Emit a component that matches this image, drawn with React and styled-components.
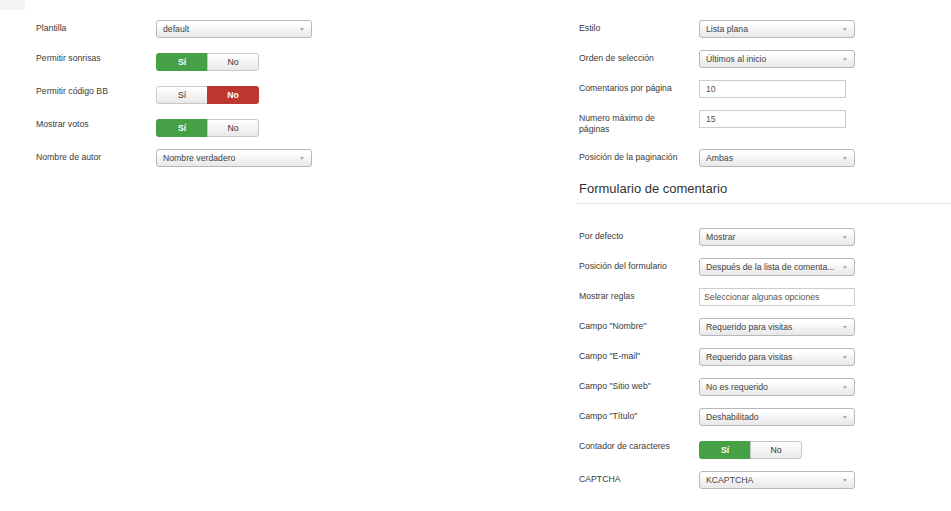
import React from "react";
import styled, { createGlobalStyle } from "styled-components";

const Global = createGlobalStyle`
  html, body { margin: 0; padding: 0; background: #fff; }
  body { font-family: "Liberation Sans", Arial, sans-serif; color: #333; }
`;

const Tab = styled.div`
  width: 25px;
  height: 10px;
  background: #f3f3f3;
  border-bottom-right-radius: 2px;
`;

const Page = styled.div`
  display: grid;
  grid-template-columns: 577px 1fr;
  margin-top: 10px;
`;

const Column = styled.div`
  padding-left: ${(p) => p.$pad}px;
  display: flex;
  flex-direction: column;
`;

const Row = styled.div`
  display: flex;
  align-items: flex-start;
  margin-bottom: 12px;
  padding-left: ${(p) => p.$indent || 0}px;
`;

const Label = styled.div`
  width: 120px;
  flex: none;
  font-size: 8.7px;
  line-height: 11px;
  padding: 3px 12px 2px 0;
  color: #3a3a3a;
  box-sizing: border-box;
`;

const Select = styled.div`
  position: relative;
  width: 156px;
  height: 18px;
  box-sizing: border-box;
  border: 1px solid #b8b8b8;
  border-radius: 3px;
  background: linear-gradient(#ffffff 20%, #f2f2f2 60%, #e8e8e8);
  font-size: 8.7px;
  line-height: 16px;
  padding-left: 6px;
  color: #444;
  white-space: nowrap;
  overflow: hidden;
  &::after {
    content: "";
    position: absolute;
    right: 7px;
    top: 7px;
    border-left: 2.5px solid transparent;
    border-right: 2.5px solid transparent;
    border-top: 3px solid #aaa;
  }
`;

const TextInput = styled.div`
  width: ${(p) => p.$w || 147}px;
  height: 18px;
  box-sizing: border-box;
  border: 1px solid #ccc;
  background: #fff;
  font-size: 8.7px;
  line-height: 16px;
  padding-left: ${(p) => p.$pl || 6}px;
  color: #555;
`;

const Toggle = styled.div`
  display: flex;
  width: 103px;
  height: 18px;
  margin-top: 3px;
`;

const ToggleBtn = styled.div`
  flex: 1;
  box-sizing: border-box;
  font-size: 8.7px;
  line-height: 16px;
  text-align: center;
  border: 1px solid ${(p) => (p.$active ? "transparent" : "#c8c8c8")};
  ${(p) => (p.$first ? "border-radius: 3px 0 0 3px;" : "border-radius: 0 3px 3px 0;")}
  ${(p) => (p.$first ? "" : "margin-left: -1px;")}
  background: ${(p) =>
    p.$active === "yes"
      ? "#46a046"
      : p.$active === "no"
      ? "#bd362f"
      : "linear-gradient(#ffffff, #e9e9e9)"};
  color: ${(p) => (p.$active ? "#fff" : "#333")};
  font-weight: ${(p) => (p.$active ? "bold" : "normal")};
`;

const Heading = styled.div`
  font-size: 13px;
  line-height: 20px;
  color: #333;
  padding: 0 0 4px 2px;
  border-bottom: 1px solid #e5e5e5;
  margin-bottom: 24px;
`;

const Switch = ({ value }) => (
  <Toggle>
    <ToggleBtn $first $active={value === "yes" ? "yes" : undefined}>Sí</ToggleBtn>
    <ToggleBtn $active={value === "no" ? "no" : undefined}>No</ToggleBtn>
  </Toggle>
);

export default function App() {
  return (
    <>
      <Global />
      <Tab />
      <Page>
        <Column $pad={36}>
          <Row>
            <Label>Plantilla</Label>
            <Select>default</Select>
          </Row>
          <Row>
            <Label>Permitir sonrisas</Label>
            <Switch value="yes" />
          </Row>
          <Row>
            <Label>Permitir código BB</Label>
            <Switch value="no" />
          </Row>
          <Row>
            <Label>Mostrar votos</Label>
            <Switch value="yes" />
          </Row>
          <Row>
            <Label>Nombre de autor</Label>
            <Select>Nombre verdadero</Select>
          </Row>
        </Column>
        <Column $pad={0}>
          <Row $indent={2}>
            <Label>Estilo</Label>
            <Select>Lista plana</Select>
          </Row>
          <Row $indent={2}>
            <Label>Orden de selección</Label>
            <Select>Últimos al inicio</Select>
          </Row>
          <Row $indent={2}>
            <Label>Comentarios por página</Label>
            <TextInput>10</TextInput>
          </Row>
          <Row $indent={2}>
            <Label>Numero máximo de páginas</Label>
            <TextInput>15</TextInput>
          </Row>
          <Row $indent={2}>
            <Label>Posición de la paginación</Label>
            <Select>Ambas</Select>
          </Row>
          <Heading>Formulario de comentario</Heading>
          <Row $indent={2}>
            <Label>Por defecto</Label>
            <Select>Mostrar</Select>
          </Row>
          <Row $indent={2}>
            <Label>Posición del formulario</Label>
            <Select>Después de la lista de comenta...</Select>
          </Row>
          <Row $indent={2}>
            <Label>Mostrar reglas</Label>
            <TextInput $w={156} $pl={4}>Seleccionar algunas opciones</TextInput>
          </Row>
          <Row $indent={2}>
            <Label>Campo "Nombre"</Label>
            <Select>Requerido para visitas</Select>
          </Row>
          <Row $indent={2}>
            <Label>Campo "E-mail"</Label>
            <Select>Requerido para visitas</Select>
          </Row>
          <Row $indent={2}>
            <Label>Campo "Sitio web"</Label>
            <Select>No es requerido</Select>
          </Row>
          <Row $indent={2}>
            <Label>Campo "Título"</Label>
            <Select>Deshabilitado</Select>
          </Row>
          <Row $indent={2}>
            <Label>Contador de caracteres</Label>
            <Switch value="yes" />
          </Row>
          <Row $indent={2}>
            <Label>CAPTCHA</Label>
            <Select>KCAPTCHA</Select>
          </Row>
        </Column>
      </Page>
    </>
  );
}
